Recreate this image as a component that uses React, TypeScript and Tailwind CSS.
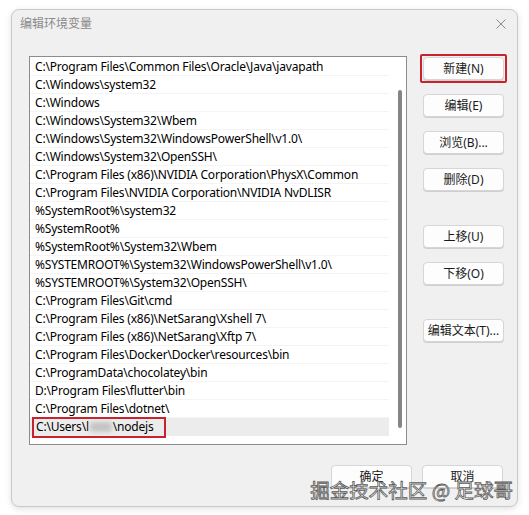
import React from "react"

const paths = [
  "C:\\Program Files\\Common Files\\Oracle\\Java\\javapath",
  "C:\\Windows\\system32",
  "C:\\Windows",
  "C:\\Windows\\System32\\Wbem",
  "C:\\Windows\\System32\\WindowsPowerShell\\v1.0\\",
  "C:\\Windows\\System32\\OpenSSH\\",
  "C:\\Program Files (x86)\\NVIDIA Corporation\\PhysX\\Common",
  "C:\\Program Files\\NVIDIA Corporation\\NVIDIA NvDLISR",
  "%SystemRoot%\\system32",
  "%SystemRoot%",
  "%SystemRoot%\\System32\\Wbem",
  "%SYSTEMROOT%\\System32\\WindowsPowerShell\\v1.0\\",
  "%SYSTEMROOT%\\System32\\OpenSSH\\",
  "C:\\Program Files\\Git\\cmd",
  "C:\\Program Files (x86)\\NetSarang\\Xshell 7\\",
  "C:\\Program Files (x86)\\NetSarang\\Xftp 7\\",
  "C:\\Program Files\\Docker\\Docker\\resources\\bin",
  "C:\\ProgramData\\chocolatey\\bin",
  "D:\\Program Files\\flutter\\bin",
  "C:\\Program Files\\dotnet\\",
]

function Btn({ label, red, className = "" }: { label: string; red?: boolean; className?: string }) {
  const btn = (
    <div className="flex h-[23px] w-[81px] items-center justify-center rounded-[4px] border border-[#d6d6d6] bg-[#fdfdfd] text-[12px] text-[#1a1a1a] shadow-[0_1px_0_#cfcfcf]">
      {label}
    </div>
  )
  if (red) {
    return <div className={`-m-[3px] rounded-[2px] border-2 border-[#c8222f] p-px ${className}`}>{btn}</div>
  }
  return <div className={className}>{btn}</div>
}

export default function App() {
  return (
    <div
      className="h-[515px] w-[529px] bg-white pl-[11px] pt-[9px]"
      style={{ fontFamily: '"Noto Sans", "Noto Sans CJK SC", sans-serif' }}
    >
      <div className="relative h-[498px] w-[507px] rounded-[8px] border border-[#c9c9c9] bg-[#f0f0f0] shadow-[0_2px_6px_rgba(0,0,0,0.12)]">
        <div className="flex h-[46px] items-start justify-between">
          <div className="pl-[8px] pt-[5px] text-[12px] text-[#8a8a8a]">编辑环境变量</div>
          <svg className="mr-[11px] mt-[9px]" width="10" height="10" viewBox="0 0 10 10">
            <path d="M0.5 0.5 L9.5 9.5 M9.5 0.5 L0.5 9.5" stroke="#8a8a8a" strokeWidth="1" fill="none" />
          </svg>
        </div>

        <div className="flex gap-[16px] pl-[17px]">
          <div className="flex h-[389px] w-[378px] border border-[#8c8c8c] bg-white">
            <div className="flex w-[359px] flex-col pt-px">
              {paths.map((p, i) => (
                <div
                  key={i}
                  className="flex h-[18px] items-center border-b border-[#f4f4f4] pl-[5px] text-[12px] leading-none tracking-[-0.2px] text-black"
                >
                  {p}
                </div>
              ))}
              <div className="flex h-[18px] items-center bg-[#ececec]">
                <div className="ml-[2px] flex h-[21px] items-center border-2 border-[#c8222f] pl-[2px] pr-[10px] text-[12px] leading-none tracking-[-0.2px] text-black">
                  C:\Users\l
                  <span className="mx-[1px] h-[10px] w-[22px] rounded-[3px] bg-[#c4c4c4] blur-[2px]" />
                  \nodejs
                </div>
              </div>
            </div>
            <div className="flex flex-1 justify-center pl-[4px] pt-[33px]">
              <div className="h-[338px] w-[4px] rounded-[2px] bg-[#858585]" />
            </div>
          </div>

          <div className="flex flex-col pt-px">
            <Btn label="新建(N)" red />
            <Btn label="编辑(E)" className="mt-[14px]" />
            <Btn label="浏览(B)..." className="mt-[14px]" />
            <Btn label="删除(D)" className="mt-[14px]" />
            <Btn label="上移(U)" className="mt-[34px]" />
            <Btn label="下移(O)" className="mt-[14px]" />
            <Btn label="编辑文本(T)..." className="mt-[34px]" />
          </div>
        </div>

        <div className="mt-[20px] flex justify-end gap-[9px] pr-[13px]">
          <Btn label="确定" className="w-[82px]" />
          <Btn label="取消" className="w-[82px]" />
        </div>

        <div className="absolute bottom-[7px] right-[4px] text-[19.5px] leading-none text-white [-webkit-text-stroke:0.8px_#5a5a5a]" style={{ fontFamily: '"Noto Sans CJK SC", sans-serif' }}>
          掘金技术社区 @ 足球哥
        </div>
      </div>
    </div>
  )
}
